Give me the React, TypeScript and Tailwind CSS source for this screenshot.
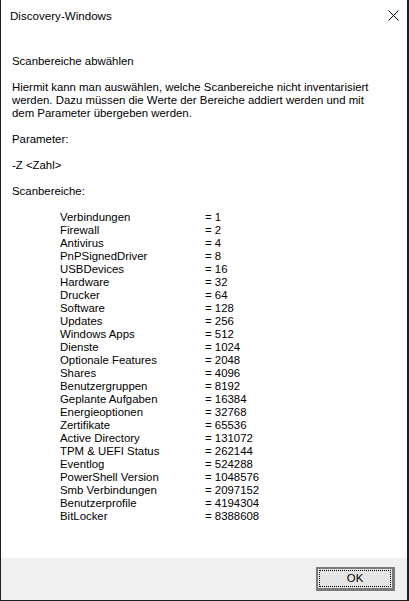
const areas: [string, number][] = [
  ["Verbindungen", 1],
  ["Firewall", 2],
  ["Antivirus", 4],
  ["PnPSignedDriver", 8],
  ["USBDevices", 16],
  ["Hardware", 32],
  ["Drucker", 64],
  ["Software", 128],
  ["Updates", 256],
  ["Windows Apps", 512],
  ["Dienste", 1024],
  ["Optionale Features", 2048],
  ["Shares", 4096],
  ["Benutzergruppen", 8192],
  ["Geplante Aufgaben", 16384],
  ["Energieoptionen", 32768],
  ["Zertifikate", 65536],
  ["Active Directory", 131072],
  ["TPM & UEFI Status", 262144],
  ["Eventlog", 524288],
  ["PowerShell Version", 1048576],
  ["Smb Verbindungen", 2097152],
  ["Benutzerprofile", 4194304],
  ["BitLocker", 8388608],
]

function CloseGlyph() {
  return (
    <svg width="11" height="11" viewBox="0 0 11 11" className="text-black">
      <path d="M0.5 0.5 L10.5 10.5 M10.5 0.5 L0.5 10.5" stroke="currentColor" strokeWidth="1" fill="none" />
    </svg>
  )
}

export default function App() {
  return (
    <div className="h-[601px] w-[409px] bg-[#1f1f1f] pb-px pl-px pr-[2px] font-['Liberation_Sans',Arial,sans-serif] text-[11.4px] text-black">
      <div className="flex h-full flex-col bg-white">
        {/* Titelleiste */}
        <header className="flex h-[31px] shrink-0 items-center justify-between pl-[9px] pr-[8px] text-[11.6px]">
          <span>Discovery-Windows</span>
          <CloseGlyph />
        </header>

        {/* Hilfetext */}
        <main className="flex-1 whitespace-nowrap px-[11px] pt-[24px] leading-[13px]">
          <p>Scanbereiche abwählen</p>
          <p className="mt-[13px]">
            Hiermit kann man auswählen, welche Scanbereiche nicht inventarisiert
            <br />
            werden. Dazu müssen die Werte der Bereiche addiert werden und mit
            <br />
            dem Parameter übergeben werden.
          </p>
          <p className="mt-[13px]">Parameter:</p>
          <p className="mt-[13px]">-Z &lt;Zahl&gt;</p>
          <p className="mt-[13px]">Scanbereiche:</p>
          <div className="mt-[13px] grid grid-cols-[145px_1fr] pl-[48px]">
            {areas.map(([name, value]) => (
              <div key={name} className="contents">
                <span>{name}</span>
                <span>= {value}</span>
              </div>
            ))}
          </div>
        </main>

        {/* Button-Leiste */}
        <footer className="flex h-[42px] shrink-0 items-start justify-end bg-[#f0f0f0] pr-[12px] pt-[9px]">
          <button className="h-[24px] w-[79px] border-2 border-b-[3px] border-r-[3px] border-[#7a7a7a] bg-[#e5e5e5] p-px">
            <span className="flex h-full w-full items-center justify-center border border-dotted border-black leading-none">
              OK
            </span>
          </button>
        </footer>
      </div>
    </div>
  )
}
